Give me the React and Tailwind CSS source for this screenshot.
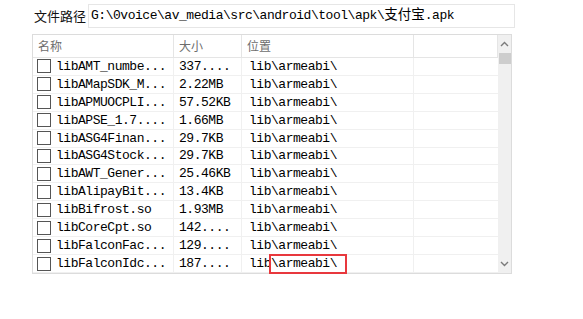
import React from 'react';

const rows = [
  ['libAMT_numbe...', '337....'],
  ['libAMapSDK_M...', '2.22MB'],
  ['libAPMUOCPLI...', '57.52KB'],
  ['libAPSE_1.7....', '1.66MB'],
  ['libASG4Finan...', '29.7KB'],
  ['libASG4Stock...', '29.7KB'],
  ['libAWT_Gener...', '25.46KB'],
  ['libAlipayBit...', '13.4KB'],
  ['libBifrost.so', '1.93MB'],
  ['libCoreCpt.so', '142....'],
  ['libFalconFac...', '129....'],
  ['libFalconIdc...', '187....'],
];

const mono = "font-['Liberation_Mono','Noto_Sans_CJK_SC',monospace] text-[13px] tracking-[-0.47px] text-[#000]";
const cjk = "font-['Noto_Sans_CJK_SC','Noto_Sans',sans-serif]";

const Row = ({ name, size, last }) => (
  <div className={`flex h-[18px] border-b border-[#f0f0f0] ${mono}`}>
    <div className="w-[141px] flex items-center border-r border-[#f0f0f0] pl-[4px]">
      <span className="w-[14px] h-[14px] border border-[#555] bg-white shrink-0" />
      <span className="ml-[5px] whitespace-pre leading-none">{name}</span>
    </div>
    <div className="w-[68px] flex items-center border-r border-[#f0f0f0] pl-[5px] whitespace-pre leading-none">
      {size}
    </div>
    <div className="w-[172px] flex items-center border-r border-[#f0f0f0] pl-[7px] whitespace-pre leading-none">
      {last ? (
        <>
          <span>lib</span>
          <span className="relative">
            \armeabi\
            <span className="absolute left-[-2px] right-[-10px] top-[-3px] bottom-[-4px] border-2 border-[#e8383d]" />
          </span>
        </>
      ) : (
        'lib\\armeabi\\'
      )}
    </div>
    <div className="w-[84px]" />
  </div>
);

export default function App() {
  return (
    <div className="w-[583px] h-[319px] bg-white relative overflow-hidden">
      <div className="flex items-center h-[24px] mt-[4px]">
        <span className={`ml-[34px] w-[54px] text-[13px] text-[#111] ${cjk}`}>文件路径</span>
        <div className={`w-[427px] h-[24px] border border-[#e6e6e6] flex items-center pl-[2px] whitespace-pre ${mono}`}>
          G:\0voice\av_media\src\android\tool\apk\<span className="text-[13.5px] tracking-normal">支付宝</span>.apk
        </div>
      </div>
      <div className="ml-[32px] mt-[6px] w-[480px] h-[240px] border border-[#dcdcdc] flex">
        <div className="flex-1 flex flex-col">
          <div className={`flex h-[23px] border-b border-[#e5e5e5] text-[12px] text-[#6d6d6d] ${cjk}`}>
            <div className="w-[141px] border-r border-[#e5e5e5] pl-[5px] flex items-center">名称</div>
            <div className="w-[68px] border-r border-[#e5e5e5] pl-[5px] flex items-center">大小</div>
            <div className="w-[172px] border-r border-[#e5e5e5] pl-[5px] flex items-center">位置</div>
            <div className="w-[84px] border-r border-[#e5e5e5]" />
          </div>
          {rows.map(([n, s], i) => (
            <Row key={n} name={n} size={s} last={i === rows.length - 1} />
          ))}
        </div>
        <div className="w-[14px] bg-[#f0f0f0] flex flex-col items-center">
          <svg width="9" height="6" viewBox="0 0 9 6" className="mt-[6px]">
            <path d="M1 5 L4.5 1.5 L8 5" stroke="#7a7a7a" strokeWidth="1.4" fill="none" />
          </svg>
          <div className="mt-[6px] w-[12px] h-[11px] bg-[#cdcdcd]" />
          <div className="flex-1" />
          <svg width="9" height="6" viewBox="0 0 9 6" className="mb-[6px]">
            <path d="M1 1 L4.5 4.5 L8 1" stroke="#7a7a7a" strokeWidth="1.4" fill="none" />
          </svg>
        </div>
      </div>
    </div>
  );
}
